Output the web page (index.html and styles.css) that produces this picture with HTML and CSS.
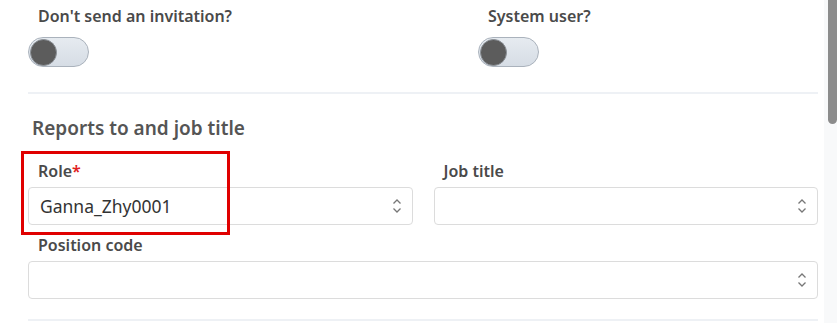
FILE: index.html
```html
<!DOCTYPE html>
<html>
  <head>
    <meta charset="utf-8" />
    <meta name="viewport" content="width=device-width, initial-scale=1.0" />
    <title>User details</title>
    <link rel="stylesheet" href="styles.css">
  </head>
  <body>
    <div class="page">
      <div class="content">
        <div class="toggles">
          <div class="toggle-field">
            <div class="label">Don't send an invitation?</div>
            <div class="switch"><div class="knob"></div></div>
          </div>
          <div class="toggle-field">
            <div class="label">System user?</div>
            <div class="switch"><div class="knob"></div></div>
          </div>
        </div>

        <div class="divider"></div>

        <h2 class="section-title">Reports to and job title</h2>

        <div class="fields">
          <div class="field highlighted">
            <div class="label">Role<span class="required">*</span></div>
            <div class="select">
              <span class="value">Ganna_Zhy0001</span>
              <svg class="chevrons" width="12" height="18" viewBox="0 0 12 18">
                <path d="M2.5 6.5 L6 3 L9.5 6.5" />
                <path d="M2.5 11.5 L6 15 L9.5 11.5" />
              </svg>
            </div>
            <div class="annotation"></div>
          </div>
          <div class="field">
            <div class="label">Job title</div>
            <div class="select">
              <span class="value"></span>
              <svg class="chevrons" width="12" height="18" viewBox="0 0 12 18">
                <path d="M2.5 6.5 L6 3 L9.5 6.5" />
                <path d="M2.5 11.5 L6 15 L9.5 11.5" />
              </svg>
            </div>
          </div>
          <div class="field wide">
            <div class="label">Position code</div>
            <div class="select">
              <span class="value"></span>
              <svg class="chevrons" width="12" height="18" viewBox="0 0 12 18">
                <path d="M2.5 6.5 L6 3 L9.5 6.5" />
                <path d="M2.5 11.5 L6 15 L9.5 11.5" />
              </svg>
            </div>
          </div>
        </div>

        <div class="divider bottom"></div>
      </div>

      <div class="scrollbar">
        <div class="thumb"></div>
      </div>
    </div>
  </body>
</html>
```

FILE: styles.css
```css
body {
  margin: 0;
  padding: 0;
  overflow: hidden;
  background: #fff;
  font-family: "Noto Sans", "Open Sans", sans-serif;
  color: #444;
}

.page {
  display: flex;
  height: 323px;
}

.content {
  flex: 1;
  padding: 6px 6px 0 28px;
}

.label {
  font-size: 16px;
  line-height: 20px;
  font-weight: 600;
  color: #4a4a4a;
  padding-left: 10px;
}

.required {
  color: #e02020;
}

.toggles {
  display: grid;
  grid-template-columns: 450px 1fr;
}

.switch {
  margin-top: 11px;
  width: 58px;
  height: 28px;
  border: 1px solid #aab2bc;
  border-radius: 15px;
  background: linear-gradient(#e6ebf0, #d6dde5);
  display: flex;
  align-items: center;
  padding-left: 1px;
  box-sizing: content-box;
}

.knob {
  width: 25px;
  height: 25px;
  border-radius: 50%;
  background: #5c5c5c;
  border: 1px solid #8a8f95;
}

.divider {
  height: 2px;
  background: #eef1f5;
  margin-top: 25px;
}

.divider.bottom {
  margin-top: 20px;
}

.section-title {
  margin: 22px 0 0 4px;
  font-size: 19px;
  line-height: 24px;
  font-weight: 600;
  color: #555;
}

.fields {
  display: grid;
  grid-template-columns: 1fr 1fr;
  column-gap: 21px;
  row-gap: 10px;
  margin-top: 21px;
}

.field {
  position: relative;
  display: flex;
  flex-direction: column;
  gap: 6px;
}

.field.wide {
  grid-column: 1 / span 2;
}

.select {
  height: 38px;
  box-sizing: border-box;
  border: 1px solid #dcdcdc;
  border-radius: 4px;
  display: flex;
  align-items: center;
  justify-content: space-between;
  padding: 0 9px 0 11px;
}

.value {
  font-size: 17.5px;
  color: #333;
}

.chevrons path {
  fill: none;
  stroke: #777;
  stroke-width: 1.3;
}

.annotation {
  position: absolute;
  left: -7px;
  top: -10px;
  width: 209px;
  height: 84px;
  box-sizing: border-box;
  border: 3px solid #e00000;
}

.scrollbar {
  width: 13px;
  background: #f8f9fa;
  display: flex;
  justify-content: flex-end;
}

.thumb {
  width: 9px;
  height: 124px;
  background: #8c8c8c;
  border-radius: 0 0 5px 5px;
}
```
